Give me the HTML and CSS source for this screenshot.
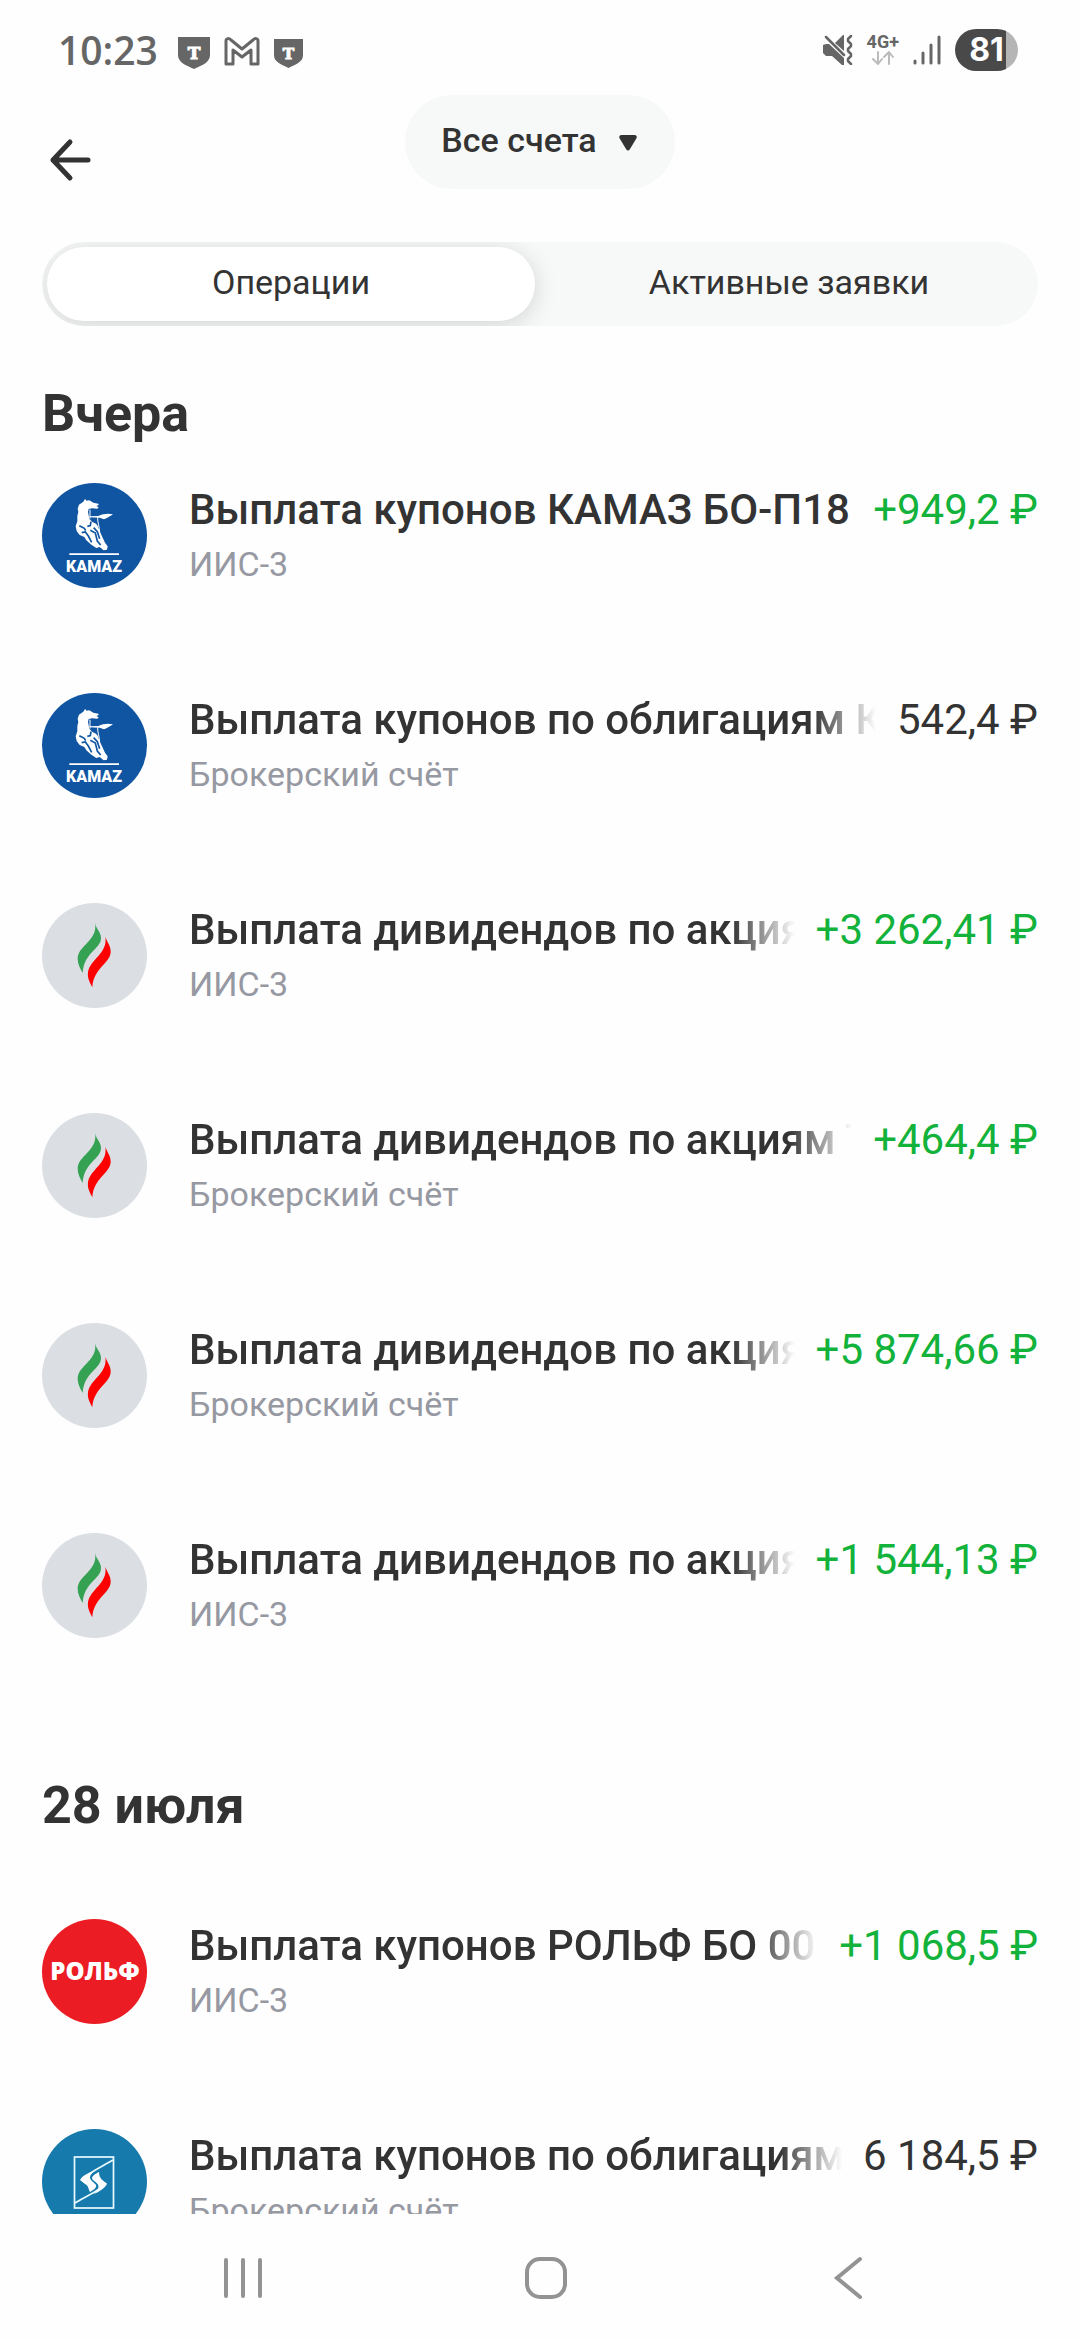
FILE: index.html
```html
<!DOCTYPE html>
<html lang="ru">
<head>
<meta charset="utf-8">
<meta name="viewport" content="width=device-width, initial-scale=1">
<title>Операции</title>
<link rel="stylesheet" href="styles.css">
</head>
<body>
<svg class="sprite" aria-hidden="true">
  <symbol id="shield" viewBox="0 0 32 32">
    <path fill="#666" d="M0 0H32V18C32 25 25 28 16 32C7 28 0 25 0 18Z"/>
    <text class="shield-letter" x="16" y="22" text-anchor="middle">T</text>
  </symbol>
  <symbol id="kamaz" viewBox="18 21 315 315">
    <rect x="18" y="21" width="315" height="315" fill="#1055a2"/>
    <path fill="#fff" d="M142 77L147 69L152 74L160 73L172 80L187 83L188 87L181 90L188 94L184 98L168 97L158 99L156 108L158 118L160 128L168 137L180 143L185 149L190 163L198 181L207 200L215 211L213 221L203 223L191 213L181 216L166 206L151 193L145 183L131 177L122 165L119 151L124 136L124 120L127 108L125 98L129 86Z"/>
    <path fill="#fff" d="M160 121L187 120C201 113 217 112 231 115C222 121 214 126 204 130C198 127 192 125 187 125L160 124Z"/>
    <path fill="none" stroke="#fff" stroke-width="3" d="M162 101V128M185 124C184 139 191 154 191 168"/>
    <path fill="none" stroke="#1055a2" stroke-width="5" d="M130 149L145 157L149 164M137 170L148 168L157 180L167 199M154 151L163 149L165 137M163 163L178 171L184 195L194 207M173 155L184 167L191 188"/>
    <path fill="#fff" d="M100 232H249V237H100Z"/>
    <text class="kamaz-text" x="174" y="287" text-anchor="middle">KAMAZ</text>
  </symbol>
  <symbol id="tatneft" viewBox="66 69 315 315">
    <rect x="66" y="69" width="315" height="315" fill="#dbdee3"/>
    <path fill="#35a153" d="M225 128C228 147 243 155 243 174C243 208 193 215 188 279C180 264 173 251 173 236C173 197 235 181 225 128Z"/>
    <path fill="#fe0000" d="M256 170C261 186 273 198 272 217C270 250 220 266 217 322C208 306 202 293 204 277C210 237 264 221 256 170Z"/>
  </symbol>
  <symbol id="rolf" viewBox="0 0 105 105">
    <rect width="105" height="105" fill="#eb1c23"/>
    <text class="rolf-text" x="53" y="61" text-anchor="middle">РОЛЬФ</text>
  </symbol>
  <symbol id="sflag" viewBox="0 0 105 105">
    <rect width="105" height="105" fill="#177aad"/>
    <rect x="32.500" y="28" width="39" height="51" fill="none" stroke="#e8fbff" stroke-width="1.700"/>
    <path fill="none" stroke="#e8fbff" stroke-width="1.700" d="M71 31C59 38 47 43 40 51M33 74C44 67 58 62 64 54"/>
    <path fill="#fff" d="M38 51C41 46 46 44 52 42C44 50 50 51 54 56C55 59 51 61 48 63C46 60 47 57 43 55Z"/>
    <path fill="#fff" d="M57 43C57 50 61 51 65 55C62 60 58 62 52 65C60 57 56 55 51 51C48 48 53 45 57 43Z"/>
  </symbol>
</svg>

<div class="app">
  <div class="status">
    <div class="status-group">
      <span class="clock">10:23</span>
      <svg class="app-mark" viewBox="0 0 32 32" aria-hidden="true"><use href="#shield"/></svg>
      <svg class="mail-mark" viewBox="0 0 36 29" aria-hidden="true"><path fill="none" stroke="#666" stroke-width="3" stroke-linejoin="round" d="M2 26V4C2 1 5 1 7 3L18 12L29 3C31 1 34 1 34 4V27H27V13L18 20L9 13V27H2Z"/></svg>
      <svg class="app-mark small" viewBox="0 0 32 32" aria-hidden="true"><use href="#shield"/></svg>
    </div>
    <div class="status-group">
      <svg class="mute" viewBox="0 0 30 30" aria-label="Без звука"><path fill="#666" d="M0 10L3 9H6L21 23V30H19L9 21H3L0 18ZM12 8L20 0H21V16Z"/><path fill="none" stroke="#666" stroke-width="2.500" stroke-linecap="round" stroke-linejoin="round" d="M3 2L21 20M28 1L25 4V6L28 9V11L25 14V16L28 19V21L25 24V26L28 29"/></svg>
      <div class="network"><span class="network-name">4G+</span>
        <svg class="traffic" viewBox="0 0 22 14" aria-hidden="true"><path fill="none" stroke="#bbb" stroke-width="2" stroke-linecap="round" stroke-linejoin="round" d="M6 1V13M1 8L6 13L10 8M17 13V1M12 6L17 1L21 6"/></svg>
      </div>
      <svg class="signal" viewBox="0 0 28 30" aria-hidden="true"><path stroke="#666" stroke-width="3" stroke-linecap="round" d="M2 26V28M10 18V28M18 10V28M26 2V28"/></svg>
      <span class="battery">81</span>
    </div>
  </div>

  <header class="header">
    <button class="back" type="button" aria-label="Назад"><svg viewBox="0 0 58 58"><path fill="none" stroke="#333" stroke-width="5" stroke-linecap="round" stroke-linejoin="round" d="M28 11L11 29L28 47M11 29H46"/></svg></button>
    <button class="account" type="button">Все счета <svg viewBox="0 0 18 16" aria-hidden="true"><path fill="#333" d="M2 0H16Q19 1 17 4L11 14Q9 17 7 14L1 4Q-1 1 2 0Z"/></svg></button>
  </header>

  <div class="tabs" role="tablist">
    <button class="tab selected" type="button" role="tab" aria-selected="true">Операции</button>
    <button class="tab" type="button" role="tab" aria-selected="false">Активные заявки</button>
  </div>

  <main class="feed">
    <section class="day today">
      <h2>Вчера</h2>
      <ul class="list">
        <li class="row"><svg class="logo" viewBox="0 0 105 105" aria-hidden="true"><use href="#kamaz"/></svg><div class="info"><div class="line"><span class="title">Выплата купонов КАМАЗ БО-П18</span><span class="amount plus">+949,2 ₽</span></div><span class="sub">ИИС-3</span></div></li>
        <li class="row"><svg class="logo" viewBox="0 0 105 105" aria-hidden="true"><use href="#kamaz"/></svg><div class="info"><div class="line"><span class="title fade">Выплата купонов по облигациям К</span><span class="amount">542,4 ₽</span></div><span class="sub">Брокерский счёт</span></div></li>
        <li class="row"><svg class="logo" viewBox="0 0 105 105" aria-hidden="true"><use href="#tatneft"/></svg><div class="info"><div class="line"><span class="title fade">Выплата дивидендов по акциям</span><span class="amount plus">+3 262,41 ₽</span></div><span class="sub">ИИС-3</span></div></li>
        <li class="row"><svg class="logo" viewBox="0 0 105 105" aria-hidden="true"><use href="#tatneft"/></svg><div class="info"><div class="line"><span class="title fade">Выплата дивидендов по акциям Т</span><span class="amount plus">+464,4 ₽</span></div><span class="sub">Брокерский счёт</span></div></li>
        <li class="row"><svg class="logo" viewBox="0 0 105 105" aria-hidden="true"><use href="#tatneft"/></svg><div class="info"><div class="line"><span class="title fade">Выплата дивидендов по акциям</span><span class="amount plus">+5 874,66 ₽</span></div><span class="sub">Брокерский счёт</span></div></li>
        <li class="row"><svg class="logo" viewBox="0 0 105 105" aria-hidden="true"><use href="#tatneft"/></svg><div class="info"><div class="line"><span class="title fade">Выплата дивидендов по акциям</span><span class="amount plus">+1 544,13 ₽</span></div><span class="sub">ИИС-3</span></div></li>
      </ul>
    </section>
    <section class="day">
      <h2>28 июля</h2>
      <ul class="list">
        <li class="row"><svg class="logo" viewBox="0 0 105 105" aria-hidden="true"><use href="#rolf"/></svg><div class="info"><div class="line"><span class="title fade">Выплата купонов РОЛЬФ БО 00</span><span class="amount plus">+1 068,5 ₽</span></div><span class="sub">ИИС-3</span></div></li>
        <li class="row"><svg class="logo" viewBox="0 0 105 105" aria-hidden="true"><use href="#sflag"/></svg><div class="info"><div class="line"><span class="title fade">Выплата купонов по облигациям</span><span class="amount">6 184,5 ₽</span></div><span class="sub">Брокерский счёт</span></div></li>
      </ul>
    </section>
  </main>

  <nav class="system-nav">
    <button type="button" aria-label="Недавние"><svg viewBox="0 0 44 44"><path d="M5 4V40M22 4V40M39 4V40"/></svg></button>
    <button type="button" aria-label="Домой"><svg viewBox="0 0 44 44"><rect x="3" y="3" width="38" height="38" rx="13"/></svg></button>
    <button type="button" aria-label="Назад"><svg viewBox="0 0 44 44"><path d="M33 3L10 22L33 41"/></svg></button>
  </nav>
</div>
</body>
</html>
```
FILE: styles.css
```css
* { box-sizing: border-box; }

body {
  margin: 0;
  background: #fefefe;
  color: #333;
  font-family: Roboto, "Noto Sans", sans-serif;
  font-size: 34px;
  line-height: 40px;
}

button {
  margin: 0;
  padding: 0;
  border: 0;
  background: none;
  color: inherit;
  font: inherit;
}

svg { display: block; flex: none; }

.sprite { position: absolute; width: 0; height: 0; }

.app {
  display: flex;
  flex-direction: column;
  height: 100vh;
}

/* Status bar */
.status {
  display: flex;
  justify-content: space-between;
  align-items: center;
  flex: none;
  height: 84px;
  padding: 16px 62px 0 58px;
}

.status-group { display: flex; align-items: center; gap: 14px; }

.clock {
  margin-right: 6px;
  color: #666;
  font-family: "Open Sans", sans-serif;
  font-size: 39px;
  font-weight: 600;
}

.app-mark { width: 32px; height: 32px; margin-top: 6px; }
.app-mark.small { width: 29px; height: 29px; }
.mail-mark { width: 36px; height: 29px; margin-top: 2px; }
.shield-letter { font: 700 17px "DejaVu Serif", serif; fill: #fff; stroke: #fff; stroke-width: 1px; }
.mute { width: 30px; height: 30px; }

.network {
  display: flex;
  flex-direction: column;
  align-items: center;
  gap: 2px;
  color: #666;
}

.network-name { font-size: 18px; line-height: 14px; font-weight: 700; }
.traffic { width: 22px; height: 14px; }
.signal { width: 28px; height: 30px; }

.battery {
  width: 63px;
  height: 42px;
  border-radius: 21px;
  background: linear-gradient(90deg, #494949 81%, #b5b5b5 81%);
  color: #fff;
  font: 700 32px/42px Inter, sans-serif;
  text-align: center;
}

/* Header */
.header {
  display: grid;
  grid-template-columns: 1fr auto 1fr;
  align-items: end;
  flex: none;
  padding: 11px 42px 53px;
}

.back { width: 58px; height: 58px; }

.account {
  display: flex;
  align-items: center;
  gap: 22px;
  height: 94px;
  padding: 0 38px 4px 36px;
  border-radius: 47px;
  background: #f7f9f8;
  font-weight: 500;
}

.account svg { width: 18px; height: 16px; margin-top: 6px; }

/* Tabs */
.tabs {
  display: grid;
  grid-template-columns: 1fr 1fr;
  gap: 10px;
  flex: none;
  height: 84px;
  margin: 0 42px;
  padding: 5px;
  border-radius: 42px;
  background: #f7f9f8;
  overflow: hidden;
}

.tab { padding-bottom: 4px; border-radius: 37px; }

.tab.selected {
  background: #fff;
  box-shadow: 0 4px 24px rgba(0, 0, 0, 0.15);
}

/* Feed */
.feed {
  flex: 1;
  min-height: 0;
  padding: 58px 42px 0;
  overflow-y: auto;
  scrollbar-width: none;
}

h2 {
  margin: 0;
  font-size: 52px;
  line-height: 60px;
  font-weight: 700;
}

.list { margin: 0; padding: 0; list-style: none; }

.day { padding-top: 33px; }
.day .list { padding-top: 83px; }
.day.today { padding-top: 0; }
.day.today .list { padding-top: 39px; }

.row {
  display: flex;
  align-items: flex-start;
  gap: 42px;
  height: 210px;
}

.logo { width: 105px; height: 105px; border-radius: 50%; }

.info {
  display: flex;
  flex-direction: column;
  flex: 1;
  gap: 9px;
  min-width: 0;
  padding-top: 2px;
}

.line {
  display: flex;
  gap: 21px;
  font-size: 42px;
  line-height: 50px;
}

.title {
  flex: 1;
  min-width: 0;
  overflow: hidden;
  font-weight: 500;
  white-space: nowrap;
}

.fade {
  -webkit-mask-image: linear-gradient(270deg, transparent, #000 63px);
  mask-image: linear-gradient(270deg, transparent, #000 63px);
}

.amount { flex: none; white-space: nowrap; }
.plus { color: #12b23b; }
.sub { color: #9698a2; }

.kamaz-text { font: 900 48px Roboto, sans-serif; fill: #fff; }
.rolf-text { font: 800 24px "Open Sans", sans-serif; fill: #fff; }

/* System navigation */
.system-nav {
  display: grid;
  grid-template-columns: repeat(3, 1fr);
  justify-items: center;
  align-items: center;
  flex: none;
  height: 126px;
  padding: 2px 80px 0 92px;
}

.system-nav svg {
  width: 44px;
  height: 44px;
  fill: none;
  stroke: #939393;
  stroke-width: 4;
  stroke-linecap: round;
}
```
